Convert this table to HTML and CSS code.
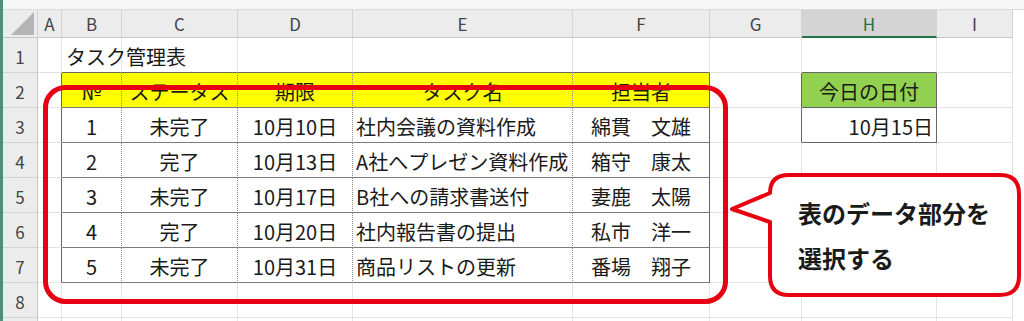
FILE: index.html
```html
<!DOCTYPE html>
<html lang="ja">
<head>
  <meta charset="UTF-8">
  <title>タスク管理表</title>
  <link rel="stylesheet" href="styles.css">
</head>
<body>
  <div class="sheet">
    <div class="topbar"></div>

    <div class="grid">
      <!-- column headers -->
      <div class="corner"><span class="select-all"></span></div>
      <div class="colhdr">A</div>
      <div class="colhdr">B</div>
      <div class="colhdr">C</div>
      <div class="colhdr">D</div>
      <div class="colhdr">E</div>
      <div class="colhdr">F</div>
      <div class="colhdr">G</div>
      <div class="colhdr active">H</div>
      <div class="colhdr">I</div>
      <div class="pad"></div>

      <!-- row 1 -->
      <div class="rowhdr">1</div>
      <div class="cell"></div>
      <div class="cell top title">タスク管理表</div>
      <div class="cell top"></div>
      <div class="cell top"></div>
      <div class="cell top"></div>
      <div class="cell top"></div>
      <div class="cell"></div>
      <div class="cell top"></div>
      <div class="cell"></div>
      <div class="pad"></div>

      <!-- row 2 -->
      <div class="rowhdr">2</div>
      <div class="cell left"></div>
      <div class="cell th">№</div>
      <div class="cell th">ステータス</div>
      <div class="cell th">期限</div>
      <div class="cell th">タスク名</div>
      <div class="cell th last">担当者</div>
      <div class="cell left"></div>
      <div class="cell today-head">今日の日付</div>
      <div class="cell"></div>
      <div class="pad"></div>

      <!-- row 3 -->
      <div class="rowhdr">3</div>
      <div class="cell left"></div>
      <div class="cell td">1</div>
      <div class="cell td">未完了</div>
      <div class="cell td">10月10日</div>
      <div class="cell td name">社内会議の資料作成</div>
      <div class="cell td last">綿貫　文雄</div>
      <div class="cell left"></div>
      <div class="cell today">10月15日</div>
      <div class="cell"></div>
      <div class="pad"></div>

      <!-- row 4 -->
      <div class="rowhdr">4</div>
      <div class="cell left"></div>
      <div class="cell td">2</div>
      <div class="cell td">完了</div>
      <div class="cell td">10月13日</div>
      <div class="cell td name">A社へプレゼン資料作成</div>
      <div class="cell td last">箱守　康太</div>
      <div class="cell"></div>
      <div class="cell"></div>
      <div class="cell"></div>
      <div class="pad"></div>

      <!-- row 5 -->
      <div class="rowhdr">5</div>
      <div class="cell left"></div>
      <div class="cell td">3</div>
      <div class="cell td">未完了</div>
      <div class="cell td">10月17日</div>
      <div class="cell td name">B社への請求書送付</div>
      <div class="cell td last">妻鹿　太陽</div>
      <div class="cell"></div>
      <div class="cell"></div>
      <div class="cell"></div>
      <div class="pad"></div>

      <!-- row 6 -->
      <div class="rowhdr">6</div>
      <div class="cell left"></div>
      <div class="cell td">4</div>
      <div class="cell td">完了</div>
      <div class="cell td">10月20日</div>
      <div class="cell td name">社内報告書の提出</div>
      <div class="cell td last">私市　洋一</div>
      <div class="cell"></div>
      <div class="cell"></div>
      <div class="cell"></div>
      <div class="pad"></div>

      <!-- row 7 -->
      <div class="rowhdr">7</div>
      <div class="cell left"></div>
      <div class="cell td">5</div>
      <div class="cell td">未完了</div>
      <div class="cell td">10月31日</div>
      <div class="cell td name">商品リストの更新</div>
      <div class="cell td last">番場　翔子</div>
      <div class="cell"></div>
      <div class="cell"></div>
      <div class="cell"></div>
      <div class="pad"></div>

      <!-- row 8 -->
      <div class="rowhdr">8</div>
      <div class="cell"></div>
      <div class="cell"></div>
      <div class="cell"></div>
      <div class="cell"></div>
      <div class="cell"></div>
      <div class="cell"></div>
      <div class="cell"></div>
      <div class="cell"></div>
      <div class="cell"></div>
      <div class="pad"></div>

      <!-- row 9, only its top edge shows -->
      <div class="rowhdr"></div>
      <div class="cell"></div>
      <div class="cell"></div>
      <div class="cell"></div>
      <div class="cell"></div>
      <div class="cell"></div>
      <div class="cell"></div>
      <div class="cell"></div>
      <div class="cell"></div>
      <div class="cell"></div>
      <div class="pad"></div>
    </div>

    <!-- red annotation: frame round the data and the speech bubble -->
    <svg class="marks" width="1024" height="321" viewBox="0 0 1024 321">
      <rect x="45.5" y="87.5" width="680" height="214" rx="20" ry="20"
            fill="none" stroke="#e60012" stroke-width="5"/>
      <path d="M789 175 H1000 Q1019 175 1019 194 V276 Q1019 295 1000 295 H789
               Q770 295 770 276 V222 L732 209 L770 193 Q770 175 789 175 Z"
            fill="#fff" stroke="#e60012" stroke-width="4" stroke-linejoin="round"/>
    </svg>
    <div class="bubble-text">表のデータ部分を<br>選択する</div>
  </div>
</body>
</html>
```

FILE: styles.css
```css
* {
  box-sizing: border-box;
}

body {
  margin: 0;
  background: #fff;
  font-family: "Noto Sans CJK JP", sans-serif;
  color: #1a1a1a;
}

.sheet {
  position: relative;
  width: 1024px;
  height: 321px;
  overflow: hidden;
  border-left: 3px solid #4e8f76;
}

.topbar {
  height: 10px;
  background: #f6f6f6;
  border-bottom: 1px solid #dcdcdc;
}

.grid {
  display: grid;
  grid-template-columns: 35px 24px 60px 116px 115px 220px 137px 92px 135px 76px 1fr;
  grid-template-rows: 28px repeat(9, 35px);
}

/* headers */
.corner {
  position: relative;
  background: #ececec;
  border-right: 1px solid #d0d0d0;
  border-bottom: 1px solid #c6c6c6;
}

.select-all {
  position: absolute;
  right: 3px;
  bottom: 2px;
  width: 0;
  height: 0;
  border-left: 23px solid transparent;
  border-bottom: 23px solid #b5b5b5;
}

.colhdr {
  display: flex;
  align-items: center;
  justify-content: center;
  background: #ececec;
  border-right: 1px solid #d4d4d4;
  border-bottom: 1px solid #c6c6c6;
  font-size: 17px;
  color: #444;
}

.colhdr.active {
  background: #d4d4d4;
  color: #217346;
  border-bottom: 2px solid #217346;
}

.rowhdr {
  display: flex;
  align-items: center;
  justify-content: center;
  background: #ececec;
  border-right: 1px solid #c6c6c6;
  border-bottom: 1px solid #d4d4d4;
  font-size: 17px;
  color: #444;
  padding-top: 3px;
}

.pad {
  background: #fff;
}

/* cells */
.cell {
  display: flex;
  align-items: center;
  justify-content: center;
  border-right: 1px solid #e3e3e3;
  border-bottom: 1px solid #e3e3e3;
  font-size: 20px;
  white-space: nowrap;
  padding-top: 3px;
}

.cell.top {
  border-bottom-color: #666;
}

.cell.left {
  border-right-color: #666;
}

.title {
  justify-content: flex-start;
  padding-left: 4px;
  overflow: visible;
  position: relative;
  z-index: 1;
}

.th,
.td {
  border-right: 1px dotted #8c8c8c;
  border-bottom: 1px solid #7a7a7a;
}

.th {
  background: #ffff00;
}

.th.last,
.td.last {
  border-right: 1px solid #666;
}

.td.name {
  justify-content: flex-start;
  padding-left: 3px;
}

.today-head {
  background: #92d050;
  border-right-color: #666;
  border-bottom-color: #666;
}

.today {
  justify-content: flex-end;
  padding-right: 3px;
  border-right-color: #666;
  border-bottom-color: #666;
}

/* annotation layer */
.marks {
  position: absolute;
  top: 0;
  left: -3px;
  pointer-events: none;
}

.bubble-text {
  position: absolute;
  left: 795px;
  top: 190px;
  font-size: 24px;
  font-weight: 700;
  line-height: 45px;
  color: #1a1a1a;
  white-space: nowrap;
}
```
